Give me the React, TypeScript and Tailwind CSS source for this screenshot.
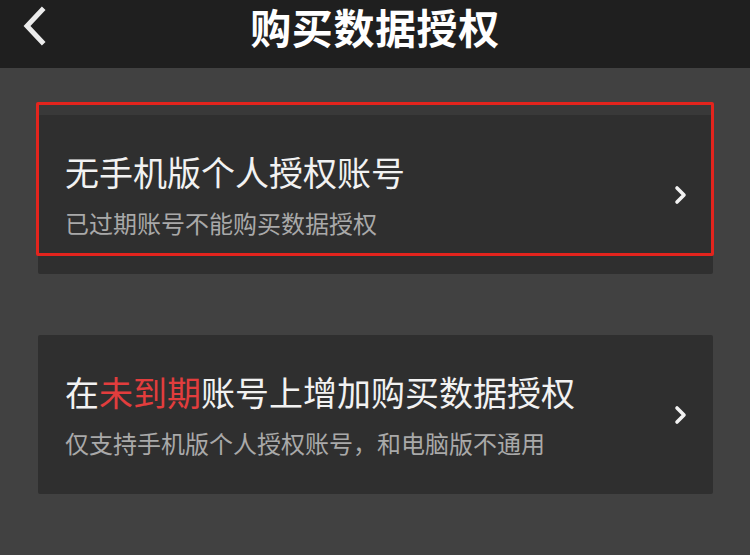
const font = { fontFamily: '"Noto Sans CJK SC", "Noto Sans", sans-serif' };

const Chevron = () => (
  <svg width="16" height="20" viewBox="0 0 16 20" className="shrink-0">
    <path d="M4 3 L11 10 L4 17" fill="none" stroke="#f2f2f2" strokeWidth="3.6" strokeLinecap="round" strokeLinejoin="round" />
  </svg>
);

const Card = ({ title, subtitle }: { title: React.ReactNode; subtitle: string }) => (
  <div className="flex items-center h-[159px] bg-[#2f2f2f] pl-[27px] pr-[24px] rounded-[2px]">
    <div className="flex-1 flex flex-col pt-[1px]">
      <div className="text-[34px] leading-[40px] text-[#f2f2f2]">{title}</div>
      <div className="mt-[16px] text-[24px] leading-[30px] text-[#a9a9a9]">{subtitle}</div>
    </div>
    <Chevron />
  </div>
);

const App = () => {
  return (
    <div className="w-[750px] h-[555px] bg-[#414141] overflow-hidden" style={font}>
      {/* Header */}
      <div className="relative h-[68px] bg-[#1f1f1f] flex justify-center">
        <svg className="absolute left-[20px] top-[6px]" width="28" height="40" viewBox="0 0 28 40">
          <path d="M22 4 L7 20 L22 36" fill="none" stroke="#ececec" strokeWidth="5" strokeLinecap="square" />
        </svg>
        <h1 className="pt-[1px] text-[41px] leading-[50px] font-bold text-white tracking-[0.6px]">购买数据授权</h1>
      </div>

      {/* Options */}
      <div className="ml-[38px] mr-[37px] mt-[47px] flex flex-col gap-[61px]">
        <div className="relative">
          <div className="absolute left-0 right-0 top-[-11px] h-[11px] bg-[#393939]" />
          <Card title="无手机版个人授权账号" subtitle="已过期账号不能购买数据授权" />
          <div className="absolute left-[-2px] right-[-1px] top-[-13px] h-[154px] border-[3px] border-[#e3241d] rounded-[2px] pointer-events-none" />
        </div>
        <Card
          title={
            <>
              在<span className="text-[#e23d3d]">未到期</span>账号上增加购买数据授权
            </>
          }
          subtitle="仅支持手机版个人授权账号，和电脑版不通用"
        />
      </div>
    </div>
  );
};

export default App;
